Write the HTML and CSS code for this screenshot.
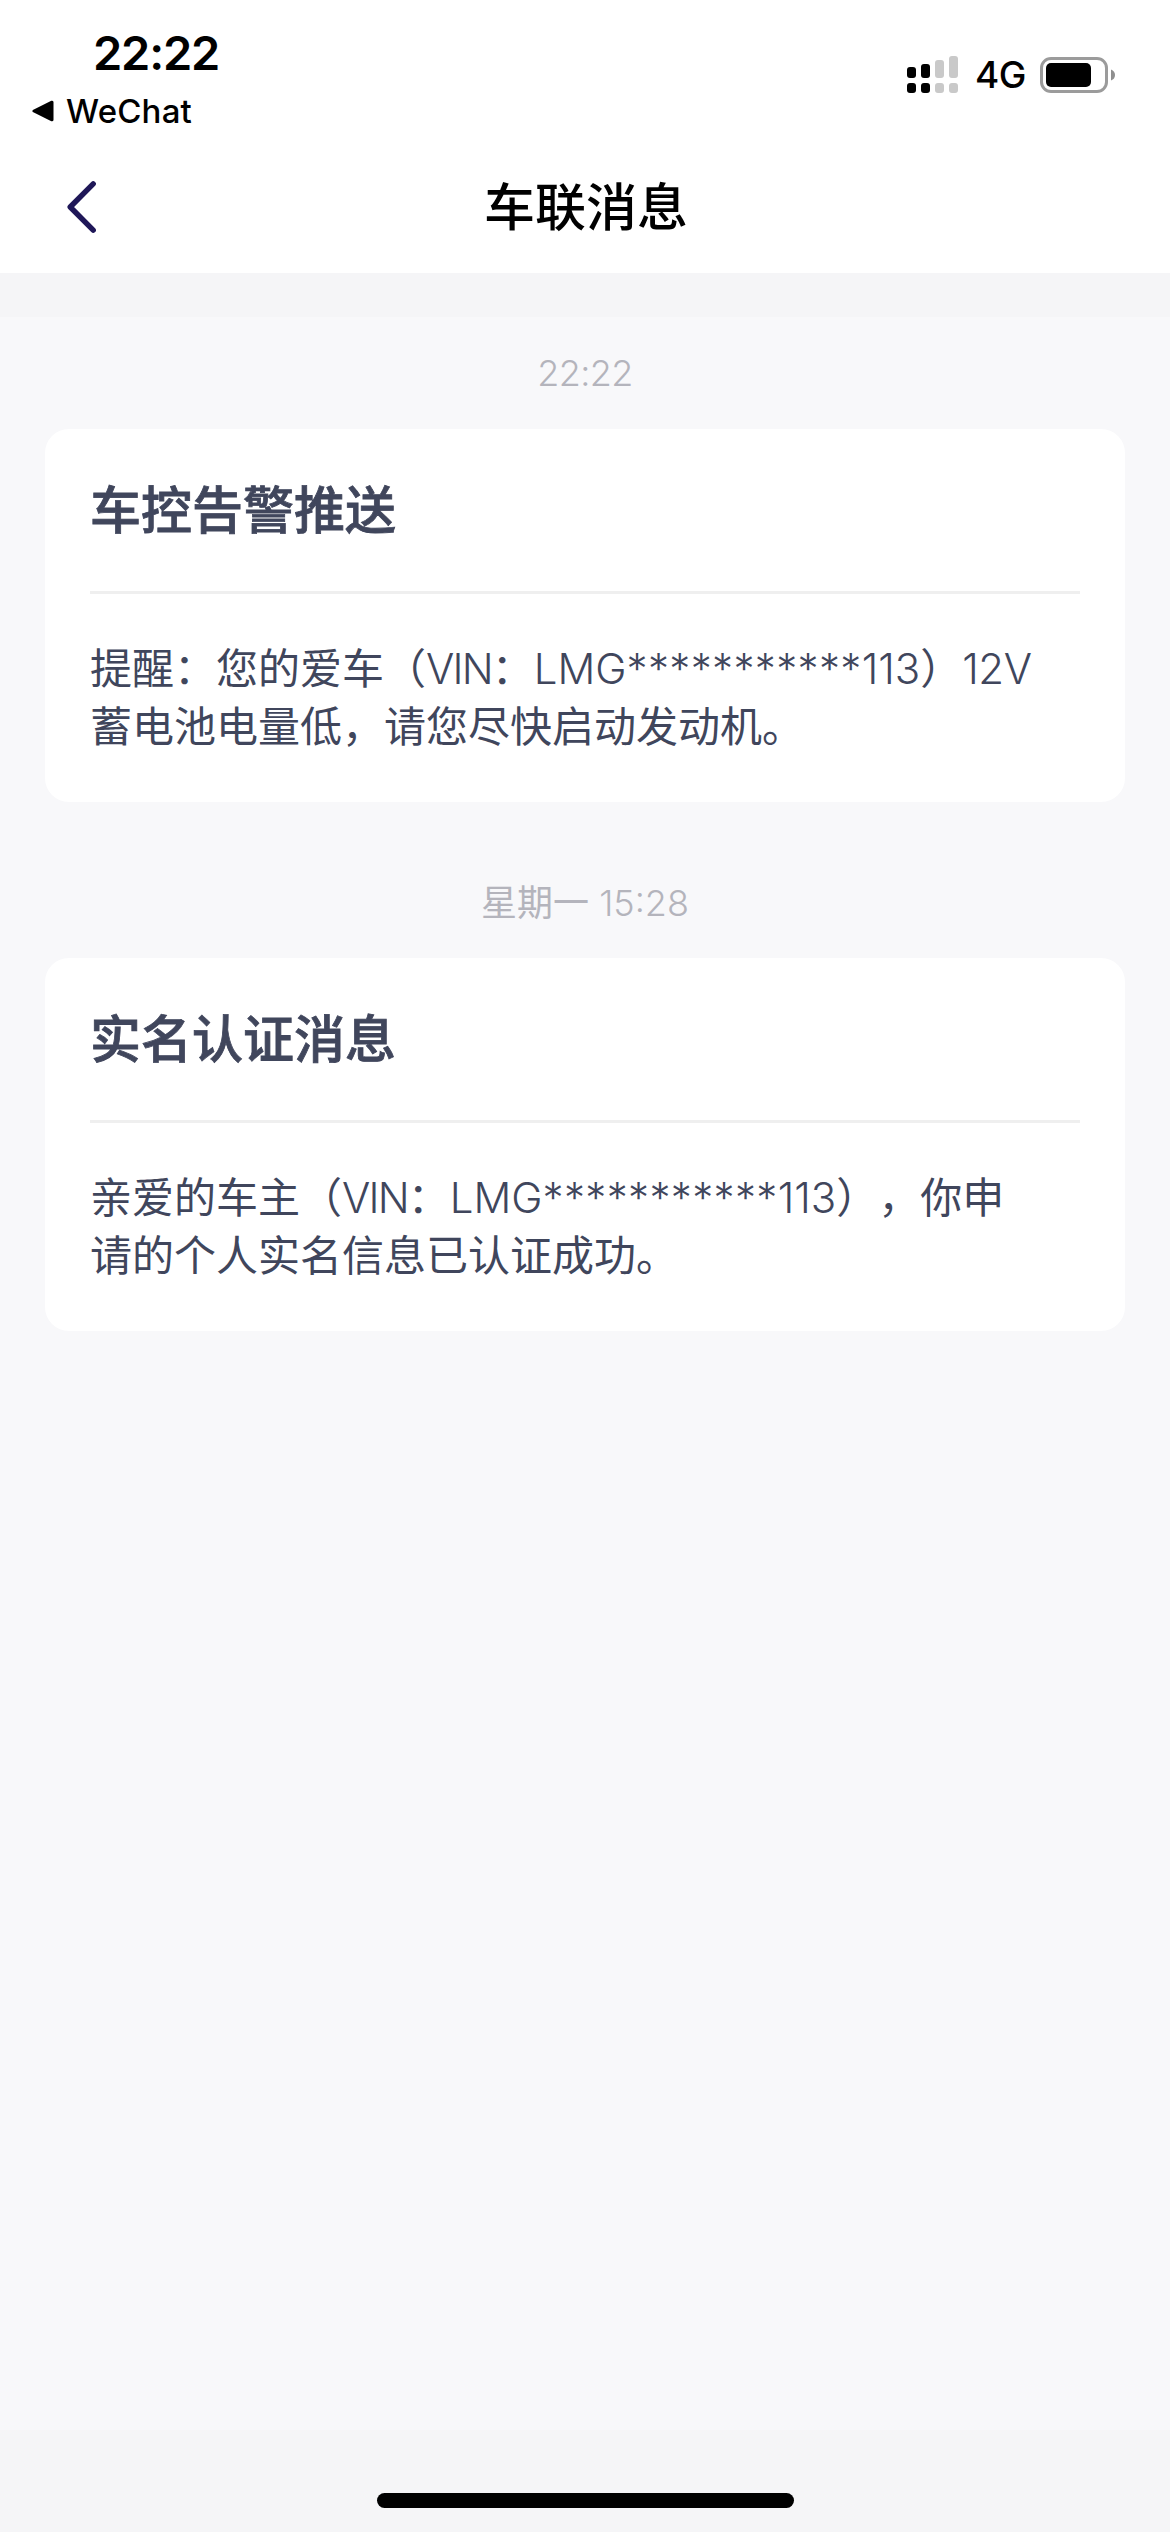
FILE: index.html
```html
<!DOCTYPE html>
<html lang="zh-CN">
<head>
<meta charset="utf-8">
<title>车联消息</title>
<link rel="stylesheet" href="styles.css">
</head>
<body>
<div class="screen">
  <header class="status">
    <div class="status-left">
      <div class="clock">22:22</div>
      <div class="return">
        <svg class="return-icon" width="22" height="22" viewBox="0 0 22 22"><path d="M2 11 20 2.2V19.8Z" fill="#000" stroke="#000" stroke-width="3" stroke-linejoin="round"/></svg>
        <span class="return-label">WeChat</span>
      </div>
    </div>
    <div class="status-right">
      <svg class="signal" width="51" height="37" viewBox="0 0 51 37">
        <g fill="#000"><rect x="0" y="11" width="9" height="11" rx="3"/><rect x="14" y="8" width="9" height="14" rx="3"/><rect x="0" y="27" width="9" height="10" rx="3"/><rect x="14" y="27" width="9" height="10" rx="3"/></g>
        <g fill="#c9c9c9"><rect x="28" y="4" width="9" height="18" rx="3"/><rect x="42" y="0" width="9" height="22" rx="3"/><rect x="28" y="27" width="9" height="10" rx="3"/><rect x="42" y="27" width="9" height="10" rx="3"/></g>
      </svg>
      <span class="network">4G</span>
      <svg class="battery" width="75" height="36" viewBox="0 0 75 36">
        <rect x="1.5" y="1.5" width="65" height="33" rx="9.5" fill="none" stroke="#9b9b9b" stroke-width="3"/>
        <rect x="6" y="6" width="45" height="24" rx="5" fill="#000"/>
        <path d="M71 12.5Q75 14 75 18T71 23.500Z" fill="#8f8f8f"/>
      </svg>
    </div>
  </header>
  <nav class="nav">
    <svg class="back" width="30" height="54" viewBox="0 0 30 54"><path d="M27.200 3.800 4.200 27 27.200 50.200" fill="none" stroke="#1f1758" stroke-width="5.400" stroke-linecap="round" stroke-linejoin="round"/></svg>
    <h1 class="nav-title">车联消息</h1>
  </nav>
  <main class="list">
    <time class="stamp stamp-clock">22:22</time>
    <article class="card">
      <h2 class="card-title">车控告警推送</h2>
      <p class="card-text">提醒：您的爱车（<span class="vin">VIN</span>：<span class="code">LMG<span class="mask">***********</span>113</span>）<span class="volt">12V</span>蓄电池电量低，请您尽快启动发动机。</p>
    </article>
    <time class="stamp">星期一 <span class="stamp-time">15:28</span></time>
    <article class="card">
      <h2 class="card-title">实名认证消息</h2>
      <p class="card-text">亲爱的车主（<span class="vin">VIN</span>：<span class="code">LMG<span class="mask">***********</span>113</span>），你申请的个人实名信息已认证成功。</p>
    </article>
  </main>
  <footer class="home"><div class="home-bar"></div></footer>
</div>
</body>
</html>
```
FILE: styles.css
```css
* { box-sizing: border-box; margin: 0; padding: 0; }

body {
  width: 1170px;
  background: #f8f8fa;
  font-family: "Inter", "Noto Sans CJK SC", sans-serif;
  text-spacing-trim: space-all;
}

.screen {
  display: flex;
  flex-direction: column;
  height: 2532px;
}

.status {
  display: flex;
  justify-content: space-between;
  height: 141px;
  padding: 24px 55px 0 32px;
  background: #fff;
  color: #000;
}

.clock {
  padding-left: 61px;
  font-size: 47px;
  font-weight: 600;
  line-height: 58px;
  letter-spacing: -1.2px;
}

.return {
  display: flex;
  align-items: center;
  gap: 12px;
  height: 58px;
}

.return-label {
  font-size: 33px;
  font-weight: 450;
  line-height: 58px;
  letter-spacing: 0.2px;
}

.status-right {
  display: flex;
  align-items: center;
  height: 101px;
}

.network {
  width: 49px;
  margin: 0 16px 0 17px;
  font-size: 37px;
  font-weight: 500;
  line-height: 44px;
  letter-spacing: -0.5px;
  white-space: nowrap;
}

.nav {
  display: grid;
  grid-template-columns: 1fr auto 1fr;
  align-items: center;
  height: 132px;
  padding: 0 64px 0 66px;
  background: #fff;
}

.nav-title {
  padding-top: 2px;
  font-size: 51px;
  font-weight: 500;
  line-height: 72px;
  color: #000;
}

.list {
  display: flex;
  flex: 1;
  flex-direction: column;
  padding: 0 45px;
  border-top: 44px solid #f5f5f7;
}

.stamp {
  height: 112px;
  font-size: 36px;
  font-weight: 400;
  line-height: 112px;
  text-align: center;
  color: #b4b4bc;
}

.stamp-clock {
  font-weight: 350;
  letter-spacing: -0.6px;
}

.stamp-time {
  font-weight: 350;
}

.card + .stamp {
  height: 156px;
  padding-top: 45px;
}

.card {
  height: 373px;
  padding: 0 45px;
  border-radius: 24px;
  background: #fff;
  color: #40465c;
}

.card-title {
  height: 165px;
  border-bottom: 3px solid #efefef;
  font-size: 51px;
  font-weight: 500;
  line-height: 164px;
  -webkit-text-stroke: 0.8px #40465c;
}

.card-text {
  padding: 46px 42px 0 0;
  font-size: 42px;
  font-weight: 400;
  line-height: 58px;
}

.vin,
.code,
.volt {
  font-weight: 350;
}

.vin {
  letter-spacing: -1.8px;
}

.code {
  letter-spacing: 0;
}

.mask {
  letter-spacing: 0.35px;
}

.volt {
  letter-spacing: -0.4px;
}

.home {
  height: 102px;
  padding-top: 63px;
  background: #f5f5f7;
}

.home-bar {
  width: 417px;
  height: 15px;
  margin: 0 auto;
  border-radius: 8px;
  background: #000;
}
```
